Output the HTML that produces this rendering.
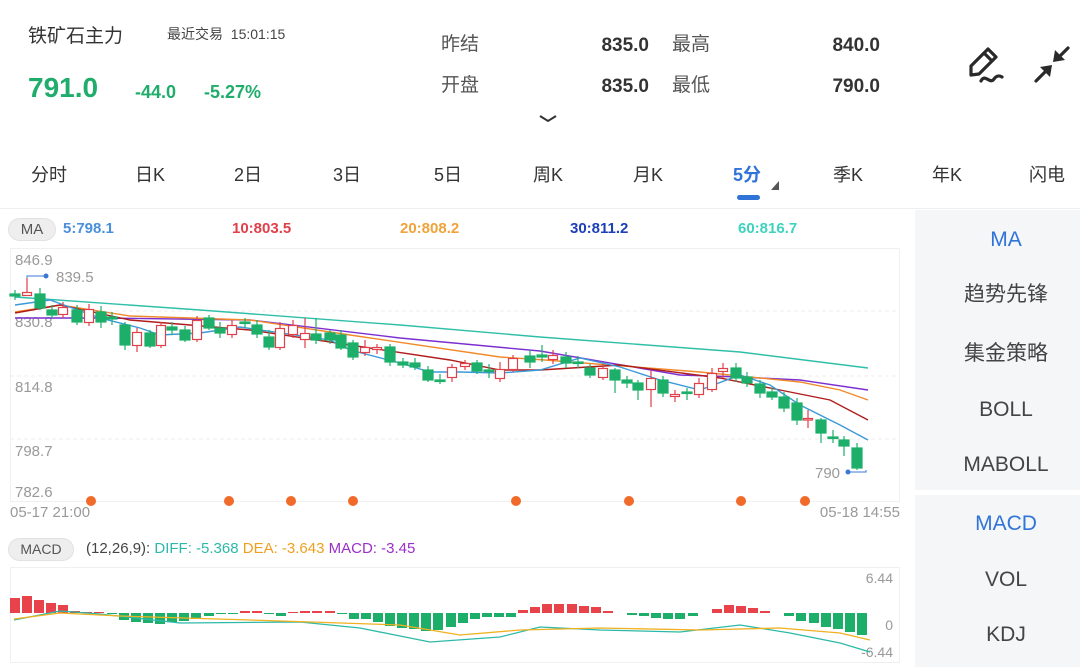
<!DOCTYPE html>
<html><head><meta charset="utf-8"><style>
*{margin:0;padding:0;box-sizing:border-box}
body{width:1080px;height:667px;background:#fff;position:relative;overflow:hidden;font-family:"Liberation Sans","Noto Sans CJK SC",sans-serif;color:#333}
.a{position:absolute;white-space:nowrap}
.g{color:#20ad6c;font-weight:bold}
.lab{font-size:19px;color:#555;line-height:24px}
.num{font-size:19px;font-weight:bold;color:#333;text-align:right;width:80px;line-height:24px}
.tab{font-size:18px;color:#333;width:80px;text-align:center;top:161px}
.rp{position:absolute;left:915px;width:165px;background:#f4f6f8}
.ri{position:absolute;left:915px;width:182px;text-align:center;font-size:21px;color:#444;line-height:28px}
</style></head><body>
<div class="a" style="left:28px;top:21px;font-size:19px;color:#333">铁矿石主力</div>
<div class="a" style="left:167px;top:24px;font-size:14px;color:#444">最近交易 &nbsp;15:01:15</div>
<div class="a g" style="left:28px;top:72px;font-size:28px">791.0</div>
<div class="a g" style="left:135px;top:82px;font-size:18px">-44.0</div>
<div class="a g" style="left:204px;top:82px;font-size:18px">-5.27%</div>
<div class="a lab" style="left:441px;top:33px">昨结</div>
<div class="a lab" style="left:441px;top:74px">开盘</div>
<div class="a num" style="left:569px;top:34px">835.0</div>
<div class="a num" style="left:569px;top:75px">835.0</div>
<div class="a lab" style="left:672px;top:33px">最高</div>
<div class="a lab" style="left:672px;top:74px">最低</div>
<div class="a num" style="left:800px;top:34px">840.0</div>
<div class="a num" style="left:800px;top:75px">790.0</div>
<svg class="a" style="left:0;top:0" width="1080" height="210">
<path d="M540 116 L548 121 L556 116" stroke="#333" stroke-width="2" fill="none"/>
<g stroke="#2a2a2a" stroke-width="3.2" fill="none" stroke-linejoin="round" stroke-linecap="round">
<path d="M971 75 L971 66 L988 49 L996 57 L979 74 Z M984 53 L992 61"/>
<path d="M981 81 C985 73 990 85 994 79 C996 76 999 75 1002 77"/>
<path d="M1036 81 L1045 72"/><path d="M1068 48 L1060 56"/>
</g>
<path d="M1052 65 L1040 67 L1050 77 Z M1053 62 L1065 60 L1055 50 Z" fill="#2a2a2a"/>
<rect x="737" y="195" width="23" height="5" rx="2.5" fill="#2f74d6"/>
<path d="M771 190 L779 181 L779 190 Z" fill="#555"/>
<line x1="0" y1="208.5" x2="1080" y2="208.5" stroke="#eee"/>
</svg>
<div class="a tab" style="left:9px">分时</div>
<div class="a tab" style="left:110px">日K</div>
<div class="a tab" style="left:208px">2日</div>
<div class="a tab" style="left:307px">3日</div>
<div class="a tab" style="left:408px">5日</div>
<div class="a tab" style="left:508px">周K</div>
<div class="a tab" style="left:608px">月K</div>
<div class="a tab" style="left:707px;color:#2f74d6;font-weight:bold">5分</div>
<div class="a tab" style="left:808px">季K</div>
<div class="a tab" style="left:907px">年K</div>
<div class="a tab" style="left:1007px">闪电</div>

<div class="rp" style="top:210px;height:280px"></div>
<div class="rp" style="top:495px;height:172px"></div>
<div class="ri" style="top:226px;color:#2f74d6">MA</div>
<div class="ri" style="top:281px">趋势先锋</div>
<div class="ri" style="top:340px">集金策略</div>
<div class="ri" style="top:396px">BOLL</div>
<div class="ri" style="top:451px">MABOLL</div>
<div class="ri" style="top:510px;color:#2f74d6">MACD</div>
<div class="ri" style="top:566px">VOL</div>
<div class="ri" style="top:621px">KDJ</div>

<div class="a" style="left:8px;top:218px;width:48px;height:23px;border-radius:12px;background:#eee;border:1px solid #e2e2e2;font-size:15px;color:#555;text-align:center;line-height:21px">MA</div>
<div class="a" style="left:63px;top:220px;font-size:15px;font-weight:bold;color:#4a8fdc">5:798.1</div>
<div class="a" style="left:232px;top:220px;font-size:15px;font-weight:bold;color:#e0404a">10:803.5</div>
<div class="a" style="left:400px;top:220px;font-size:15px;font-weight:bold;color:#f0a33a">20:808.2</div>
<div class="a" style="left:570px;top:220px;font-size:15px;font-weight:bold;color:#1d3fb8">30:811.2</div>
<div class="a" style="left:738px;top:220px;font-size:15px;font-weight:bold;color:#3ed2bf">60:816.7</div>

<svg class="a" style="left:0;top:240px" width="915" height="280" viewBox="0 240 915 280">
<rect x="10.5" y="248.5" width="889" height="253" fill="none" stroke="#f0f0f0"/>
<g stroke="#eee" stroke-dasharray="4 3"><line x1="10" y1="311" x2="900" y2="311"/><line x1="10" y1="376" x2="900" y2="376"/><line x1="10" y1="439" x2="900" y2="439"/></g>
<g font-size="15" fill="#999" font-family="Liberation Sans">
<text x="15" y="265">846.9</text><text x="15" y="327">830.8</text><text x="15" y="392">814.8</text><text x="15" y="456">798.7</text><text x="15" y="497">782.6</text>
<text x="56" y="282">839.5</text><text x="815" y="478">790</text>
<text x="10" y="517">05-17 21:00</text><text x="900" y="517" text-anchor="end">05-18 14:55</text>
</g>
<path d="M27 288 L27 276 L46 276" stroke="#3a78d8" fill="none"/><circle cx="46" cy="276" r="2.5" fill="#3a78d8"/>
<path d="M866 470 L866 472 L848 472" stroke="#3a78d8" fill="none"/><circle cx="848" cy="472" r="2.5" fill="#3a78d8"/>
<g fill="none" stroke-width="1.4">
<polyline stroke="#2fbfa8" points="15,297 200,310 400,325 540,337 740,352 868,368"/>
<polyline stroke="#7b2fd0" points="15,318 100,318 250,320 400,338 540,351 680,375 740,377 800,380 868,390"/>
<polyline stroke="#f08a2a" points="15,312 60,305 130,316 250,320 350,335 500,357 545,360 700,372 800,382 840,390 868,400"/>
<polyline stroke="#b01c1c" points="15,313 60,305 130,320 250,330 350,345 450,360 500,370 540,370 620,365 720,378 780,390 830,400 868,420"/>
<polyline stroke="#3a9ad8" points="15,305 50,300 100,318 140,328 160,335 200,333 240,327 330,340 350,350 400,363 430,372 460,372 500,373 540,370 580,358 620,367 660,380 700,390 740,375 770,385 800,405 840,425 868,440"/>
</g>
<g stroke-width="1.2">
<g fill="#1daf6a" stroke="#1daf6a">
<line x1="15" y1="290" x2="15" y2="300"/><rect x="10" y="294" width="10" height="2"/>
<line x1="40" y1="288" x2="40" y2="310"/><rect x="35" y="294" width="10" height="14"/>
<line x1="52" y1="305" x2="52" y2="318"/><rect x="47" y="310" width="10" height="5"/>
<line x1="77" y1="305" x2="77" y2="325"/><rect x="72" y="310" width="10" height="12"/>
<line x1="101" y1="306" x2="101" y2="328"/><rect x="96" y="312" width="10" height="10"/>
<line x1="112" y1="312" x2="112" y2="325"/><rect x="107" y="317" width="10" height="2"/>
<line x1="125" y1="322" x2="125" y2="350"/><rect x="120" y="325" width="10" height="20"/>
<line x1="150" y1="330" x2="150" y2="348"/><rect x="145" y="333" width="10" height="13"/>
<line x1="172" y1="322" x2="172" y2="335"/><rect x="167" y="327" width="10" height="3"/>
<line x1="185" y1="326" x2="185" y2="342"/><rect x="180" y="330" width="10" height="10"/>
<line x1="209" y1="315" x2="209" y2="330"/><rect x="204" y="318" width="10" height="10"/>
<line x1="220" y1="322" x2="220" y2="338"/><rect x="215" y="328" width="10" height="5"/>
<line x1="245" y1="318" x2="245" y2="328"/><rect x="240" y="322" width="10" height="1.5"/>
<line x1="257" y1="320" x2="257" y2="338"/><rect x="252" y="325" width="10" height="9"/>
<line x1="269" y1="330" x2="269" y2="350"/><rect x="264" y="337" width="10" height="10"/>
<line x1="316" y1="318" x2="316" y2="344"/><rect x="311" y="334" width="10" height="6"/>
<line x1="330" y1="330" x2="330" y2="344"/><rect x="325" y="333" width="10" height="7"/>
<line x1="341" y1="330" x2="341" y2="350"/><rect x="336" y="335" width="10" height="13"/>
<line x1="353" y1="340" x2="353" y2="360"/><rect x="348" y="343" width="10" height="14"/>
<line x1="390" y1="344" x2="390" y2="366"/><rect x="385" y="347" width="10" height="15"/>
<line x1="403" y1="358" x2="403" y2="368"/><rect x="398" y="362" width="10" height="3"/>
<line x1="415" y1="358" x2="415" y2="370"/><rect x="410" y="363" width="10" height="4"/>
<line x1="428" y1="366" x2="428" y2="382"/><rect x="423" y="370" width="10" height="10"/>
<line x1="440" y1="374" x2="440" y2="384"/><rect x="435" y="380" width="10" height="1.5"/>
<line x1="477" y1="360" x2="477" y2="374"/><rect x="472" y="363" width="10" height="8"/>
<line x1="489" y1="364" x2="489" y2="378"/><rect x="484" y="370" width="10" height="1.5"/>
<line x1="530" y1="350" x2="530" y2="368"/><rect x="525" y="356" width="10" height="6"/>
<line x1="542" y1="345" x2="542" y2="362"/><rect x="537" y="355" width="10" height="2"/>
<line x1="566" y1="352" x2="566" y2="368"/><rect x="561" y="357" width="10" height="6"/>
<line x1="578" y1="356" x2="578" y2="368"/><rect x="573" y="362" width="10" height="1.5"/>
<line x1="590" y1="364" x2="590" y2="378"/><rect x="585" y="368" width="10" height="7"/>
<line x1="615" y1="368" x2="615" y2="393"/><rect x="610" y="370" width="10" height="10"/>
<line x1="627" y1="376" x2="627" y2="388"/><rect x="622" y="380" width="10" height="3"/>
<line x1="638" y1="380" x2="638" y2="400"/><rect x="633" y="383" width="10" height="7"/>
<line x1="663" y1="376" x2="663" y2="397"/><rect x="658" y="380" width="10" height="13"/>
<line x1="687" y1="388" x2="687" y2="400"/><rect x="682" y="392" width="10" height="1.5"/>
<line x1="736" y1="363" x2="736" y2="382"/><rect x="731" y="368" width="10" height="10"/>
<line x1="747" y1="372" x2="747" y2="387"/><rect x="742" y="377" width="10" height="6"/>
<line x1="760" y1="380" x2="760" y2="398"/><rect x="755" y="384" width="10" height="9"/>
<line x1="772" y1="388" x2="772" y2="400"/><rect x="767" y="392" width="10" height="5"/>
<line x1="784" y1="392" x2="784" y2="412"/><rect x="779" y="397" width="10" height="11"/>
<line x1="797" y1="398" x2="797" y2="425"/><rect x="792" y="403" width="10" height="17"/>
<line x1="821" y1="418" x2="821" y2="443"/><rect x="816" y="420" width="10" height="13"/>
<line x1="833" y1="430" x2="833" y2="443"/><rect x="828" y="437" width="10" height="1.5"/>
<line x1="844" y1="436" x2="844" y2="456"/><rect x="839" y="440" width="10" height="6"/>
<line x1="857" y1="443" x2="857" y2="470"/><rect x="852" y="448" width="10" height="20"/>
</g>
<g fill="#fff" stroke="#e0404a">
<line x1="27" y1="278" x2="27" y2="293"/><rect x="22.5" y="292.5" width="9" height="3"/>
<line x1="63" y1="302" x2="63" y2="318"/><rect x="58.5" y="307.5" width="9" height="7"/>
<line x1="89" y1="304" x2="89" y2="326"/><rect x="84.5" y="309.5" width="9" height="13"/>
<line x1="137" y1="328" x2="137" y2="352"/><rect x="132.5" y="332.5" width="9" height="13"/>
<line x1="161" y1="322" x2="161" y2="348"/><rect x="156.5" y="325.5" width="9" height="20"/>
<line x1="197" y1="316" x2="197" y2="342"/><rect x="192.5" y="320.5" width="9" height="19"/>
<line x1="232" y1="320" x2="232" y2="338"/><rect x="227.5" y="325.5" width="9" height="9"/>
<line x1="280" y1="322" x2="280" y2="350"/><rect x="275.5" y="328.5" width="9" height="19"/>
<line x1="293" y1="320" x2="293" y2="338"/><rect x="288.5" y="325.5" width="9" height="9"/>
<line x1="305" y1="318" x2="305" y2="348"/><rect x="300.5" y="333.5" width="9" height="6"/>
<line x1="365" y1="340" x2="365" y2="356"/><rect x="360.5" y="347.5" width="9" height="5"/>
<line x1="377" y1="344" x2="377" y2="354"/><rect x="372.5" y="347.5" width="9" height="2"/>
<line x1="452" y1="364" x2="452" y2="382"/><rect x="447.5" y="367.5" width="9" height="10"/>
<line x1="465" y1="360" x2="465" y2="370"/><rect x="460.5" y="363.5" width="9" height="3"/>
<line x1="500" y1="362" x2="500" y2="382"/><rect x="495.5" y="369.5" width="9" height="9"/>
<line x1="513" y1="355" x2="513" y2="372"/><rect x="508.5" y="358.5" width="9" height="11"/>
<line x1="553" y1="350" x2="553" y2="364"/><rect x="548.5" y="355.5" width="9" height="4"/>
<line x1="603" y1="364" x2="603" y2="380"/><rect x="598.5" y="368.5" width="9" height="9"/>
<line x1="651" y1="370" x2="651" y2="407"/><rect x="646.5" y="378.5" width="9" height="11"/>
<line x1="675" y1="390" x2="675" y2="402"/><rect x="670.5" y="394.5" width="9" height="2"/>
<line x1="699" y1="378" x2="699" y2="398"/><rect x="694.5" y="383.5" width="9" height="11"/>
<line x1="712" y1="368" x2="712" y2="392"/><rect x="707.5" y="373.5" width="9" height="16"/>
<line x1="723" y1="363" x2="723" y2="378"/><rect x="718.5" y="368.5" width="9" height="3"/>
<line x1="808" y1="410" x2="808" y2="428"/><rect x="803.5" y="418.5" width="9" height="1.5"/>
</g>
</g>
<g fill="#f26a2a"><circle cx="91" cy="501" r="5"/><circle cx="229" cy="501" r="5"/><circle cx="291" cy="501" r="5"/><circle cx="353" cy="501" r="5"/><circle cx="516" cy="501" r="5"/><circle cx="629" cy="501" r="5"/><circle cx="741" cy="501" r="5"/><circle cx="805" cy="501" r="5"/></g>
</svg>

<div class="a" style="left:8px;top:538px;width:66px;height:23px;border-radius:12px;background:#eee;border:1px solid #e2e2e2;font-size:14px;color:#555;text-align:center;line-height:21px">MACD</div>
<div class="a" style="left:86px;top:540px;font-size:15px;color:#444">(12,26,9): <span style="color:#2db9a8">DIFF: -5.368</span> <span style="color:#f0a020">DEA: -3.643</span> <span style="color:#9b2fc8">MACD: -3.45</span></div>

<svg class="a" style="left:0;top:560px" width="915" height="107" viewBox="0 560 915 107">
<rect x="10.5" y="567.5" width="889" height="95" fill="none" stroke="#f0f0f0"/>
<g font-size="14" fill="#999" font-family="Liberation Sans" text-anchor="end">
<text x="893" y="583">6.44</text><text x="893" y="630">0</text><text x="893" y="657">-6.44</text></g>
<g fill="#e8434a">
<rect x="10" y="598" width="10" height="15"/><rect x="22" y="596" width="10" height="17"/><rect x="34" y="600" width="10" height="13"/><rect x="46" y="603" width="10" height="10"/><rect x="58" y="605" width="10" height="8"/><rect x="70" y="611" width="10" height="2"/><rect x="82" y="612" width="10" height="1"/><rect x="94" y="612" width="10" height="1"/>
<rect x="240" y="611" width="10" height="2"/><rect x="252" y="611" width="10" height="2"/><rect x="288" y="612" width="10" height="1"/><rect x="300" y="611" width="10" height="2"/><rect x="312" y="611" width="10" height="2"/><rect x="325" y="611" width="10" height="2"/>
<rect x="518" y="610" width="10" height="3"/><rect x="530" y="607" width="10" height="6"/><rect x="542" y="604" width="10" height="9"/><rect x="554" y="604" width="10" height="9"/><rect x="567" y="604" width="10" height="9"/><rect x="579" y="606" width="10" height="7"/><rect x="591" y="607" width="10" height="6"/><rect x="603" y="611" width="10" height="2"/>
<rect x="712" y="609" width="10" height="4"/><rect x="724" y="605" width="10" height="8"/><rect x="736" y="606" width="10" height="7"/><rect x="748" y="608" width="10" height="5"/><rect x="760" y="611" width="10" height="2"/>
</g>
<g fill="#1daf6a">
<rect x="107" y="613" width="10" height="1"/><rect x="119" y="613" width="10" height="7"/><rect x="131" y="613" width="10" height="9"/><rect x="143" y="613" width="10" height="10"/><rect x="155" y="613" width="10" height="11"/><rect x="167" y="613" width="10" height="9"/><rect x="179" y="613" width="10" height="8"/><rect x="191" y="613" width="10" height="6"/><rect x="204" y="613" width="10" height="3"/><rect x="216" y="613" width="10" height="1"/><rect x="228" y="613" width="10" height="1"/><rect x="264" y="613" width="10" height="1"/><rect x="276" y="613" width="10" height="3"/><rect x="337" y="613" width="10" height="1"/>
<rect x="349" y="613" width="10" height="6"/><rect x="361" y="613" width="10" height="6"/><rect x="373" y="613" width="10" height="9"/><rect x="385" y="613" width="10" height="13"/><rect x="397" y="613" width="10" height="15"/><rect x="409" y="613" width="10" height="16"/><rect x="421" y="613" width="10" height="18"/><rect x="433" y="613" width="10" height="17"/><rect x="446" y="613" width="10" height="14"/><rect x="458" y="613" width="10" height="10"/><rect x="470" y="613" width="10" height="6"/><rect x="482" y="613" width="10" height="4"/><rect x="494" y="613" width="10" height="4"/><rect x="506" y="613" width="10" height="4"/>
<rect x="627" y="613" width="10" height="2"/><rect x="639" y="613" width="10" height="3"/><rect x="651" y="613" width="10" height="5"/><rect x="663" y="613" width="10" height="6"/><rect x="675" y="613" width="10" height="6"/><rect x="688" y="613" width="10" height="3"/>
<rect x="784" y="613" width="10" height="3"/><rect x="796" y="613" width="10" height="8"/><rect x="809" y="613" width="10" height="10"/><rect x="821" y="613" width="10" height="14"/><rect x="833" y="613" width="10" height="16"/><rect x="845" y="613" width="10" height="19"/><rect x="857" y="613" width="10" height="22"/>
</g>
<g fill="none" stroke-width="1.3">
<polyline stroke="#2db9a8" points="14,620 60,611 100,614 180,623 300,622 360,628 430,642 500,637 540,627 600,630 680,632 740,625 790,633 840,643 870,652"/>
<polyline stroke="#f0b020" points="14,619 60,613 120,616 250,620 400,625 460,635 520,630 600,628 700,630 780,628 840,633 870,640"/>
</g>
</svg>
</body></html>
